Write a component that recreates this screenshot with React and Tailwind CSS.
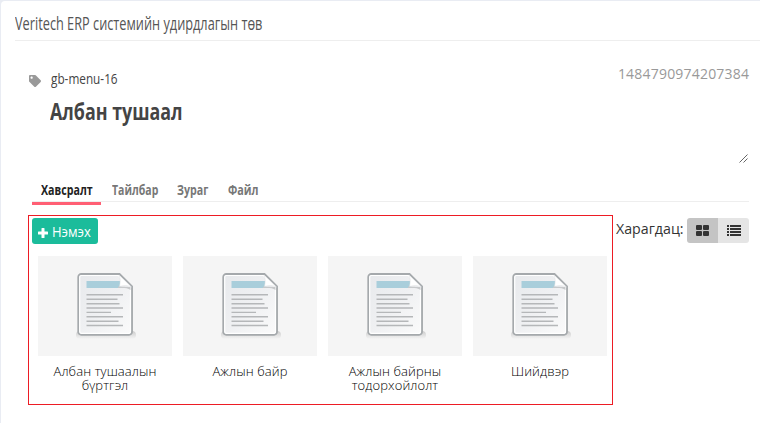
import React from 'react';
import { FaTag } from 'react-icons/fa';

function DocumentIcon() {
  return (
    <svg width="62" height="68" viewBox="0 0 62 68" className="block">
      <defs>
        <linearGradient id="page" x1="0" y1="0" x2="1" y2="1">
          <stop offset="0" stopColor="#e7e9ec" />
          <stop offset="0.5" stopColor="#eff0f2" />
          <stop offset="1" stopColor="#fbfbfb" />
        </linearGradient>
        <linearGradient id="shadow" x1="0" y1="0" x2="0" y2="1">
          <stop offset="0" stopColor="#cccccc" />
          <stop offset="1" stopColor="#cccccc" stopOpacity="0" />
        </linearGradient>
      </defs>
      <rect x="1" y="58" width="60" height="8" rx="4" fill="url(#shadow)" />
      <path d="M6.300 1H44.500L57 13.500V58.800a3 3 0 0 1-3 3H6.300a3 3 0 0 1-3-3V4a3 3 0 0 1 3-3Z" fill="url(#page)" stroke="#a5a9ac" strokeWidth="1.900" />
      <path d="M6.500 2.500H43.500L55.500 14.500V58.500a1.800 1.800 0 0 1-1.800 1.800H6.500a1.800 1.800 0 0 1-1.800-1.800V4.300a1.800 1.800 0 0 1 1.800-1.800Z" fill="none" stroke="#fff" strokeWidth="1.200" />
      <rect x="11.500" y="8" width="34" height="7" fill="#a9cedb" />
      <path d="M43 13.500 55.500 14v3c-3-2.500-8-2-12.500-2Z" fill="#c7c9cb" />
      <path d="M44 2C45.500 5 45.500 9 44.500 13.500c4-1.300 8-1.300 12 0.500Z" fill="#fff" stroke="#dddfe0" strokeWidth="0.500" />
      <path d="M11.500 21.800h36.500M11.500 26.300h31M11.500 30.700h33M11.500 35h36.500M11.500 39.400h24.500M11.500 43.800h36.500M11.500 48.200h32M11.500 52.500h36.500" stroke="#b5b7b9" strokeWidth="1.400" />
    </svg>
  );
}

function Tile({ children }) {
  return (
    <div className="w-[134px]">
      <div className="flex h-[100px] justify-center bg-[#f5f5f5] pt-[17px] pl-[2px]">
        <DocumentIcon />
      </div>
      <div className="pt-2 text-center text-[13px] leading-[14px] font-[350] tracking-[0.1px] text-black">{children}</div>
    </div>
  );
}

export default function App() {
  return (
    <div className="h-[423px] w-[760px] overflow-hidden bg-[#e9ecf3] pt-px pl-px font-['Open_Sans',sans-serif]">
      <div className="h-full rounded-tl-[4px] bg-white pl-[14px]">
        <header className="flex h-10 items-center border-b border-[#eeeeee] pt-[6px]">
          <span className="origin-left scale-x-[0.708] whitespace-nowrap text-[18px] text-[#555]">Veritech ERP системийн удирдлагын төв</span>
        </header>

        <section className="flex h-[124px] justify-between pr-[11px] pl-[14px]">
          <div className="pt-[26px]">
            <div className="flex h-6 items-center">
              <FaTag className="mt-[3px] size-3 text-[#999]" />
              <span className="-mt-[2px] ml-[10px] origin-left scale-x-[0.785] whitespace-nowrap text-[15px] text-[#444]">gb-menu-16</span>
            </div>
            <h1 className="ml-[21px] origin-left scale-x-[0.744] whitespace-nowrap text-[24px] leading-10 font-bold text-[#444]">Албан тушаал</h1>
          </div>
          <div className="flex flex-col items-end justify-between pt-[23px]">
            <span className="-mr-[0.2px] text-[14px] leading-5 tracking-[0.2px] text-[#999]">1484790974207384</span>
            <svg width="9" height="9" viewBox="0 0 9 9" className="mb-[2px] mr-px">
              <path d="M0.500 8.500 8.500 0.500M4.500 8.500 8.500 4.500" stroke="#555" strokeWidth="0.900" />
            </svg>
          </div>
        </section>

        <nav className="mr-[11px] ml-[17px] flex h-[37px] border-b border-[#eeeeee] text-[15px] font-bold text-[#777]">
          <div className="z-10 flex h-[40px] w-[69px] items-center border-b-[3px] border-[#ff5f74] pt-[11px] pl-[9px] text-[#222]">
            <span className="origin-left scale-x-[0.71]">Хавсралт</span>
          </div>
          <div className="flex h-[37px] w-[65px] items-center pt-[11px] pl-[11px]"><span className="origin-left scale-x-[0.7]">Тайлбар</span></div>
          <div className="flex h-[37px] w-[51px] items-center pt-[11px] pl-[11px]"><span className="origin-left scale-x-[0.71]">Зураг</span></div>
          <div className="flex h-[37px] items-center pt-[11px] pl-[11px]"><span className="origin-left scale-x-[0.72]">Файл</span></div>
        </nav>

        <main className="mt-[13px] ml-[13px] flex">
          <div className="h-[190px] w-[585px] border border-[#ed1c24] pt-[2px] pl-[3px]">
            <button className="flex h-[26px] w-[66px] items-center rounded-[3px] bg-[#1bbc9b] pl-[6px] text-[14px] text-white">
              <svg width="10" height="10" viewBox="0 0 10 10" className="mt-[3px]">
                <path d="M4 0h2q.5 0 .5.500v3h3q.5 0 .5.500v2q0 .5-.5.500h-3v3q0 .5-.5.500H4q-.5 0-.5-.500v-3h-3Q0 6.500 0 6V4q0-.5.500-.500h3v-3Q3.500 0 4 0Z" fill="currentColor" />
              </svg>
              <span className="ml-1 origin-left scale-x-[0.93]">Нэмэх</span>
            </button>
            <div className="mt-3 ml-[6px] flex gap-[11px]">
              <Tile>Албан тушаалын<br />бүртгэл</Tile>
              <Tile>Ажлын байр</Tile>
              <Tile>Ажлын байрны<br />тодорхойлолт</Tile>
              <Tile>Шийдвэр</Tile>
            </div>
          </div>
          <div className="mt-[3px] ml-[3px] flex h-[25px]">
            <span className="w-[71px] origin-left scale-x-[1.015] whitespace-nowrap text-[14px] leading-[22px] text-[#333]">Харагдац:</span>
            <div className="flex overflow-hidden rounded-[3px] text-[#333]">
              <div className="flex w-[31px] items-center justify-center bg-[#c4c4c4]">
                <svg width="13" height="11" viewBox="0 0 13 11" fill="currentColor">
                  <rect width="6" height="5" rx="1" />
                  <rect x="7" width="6" height="5" rx="1" />
                  <rect y="6" width="6" height="5" rx="1" />
                  <rect x="7" y="6" width="6" height="5" rx="1" />
                </svg>
              </div>
              <div className="flex w-[31px] items-center justify-center bg-[#e5e5e5]">
                <svg width="14" height="11" viewBox="0 0 14 11" fill="currentColor">
                  <path d="M0 0h2v2H0zM3 0h11v2H3zM0 3h2v2H0zM3 3h11v2H3zM0 6h2v2H0zM3 6h11v2H3zM0 9h2v2H0zM3 9h11v2H3z" />
                </svg>
              </div>
            </div>
          </div>
        </main>
      </div>
    </div>
  );
}
